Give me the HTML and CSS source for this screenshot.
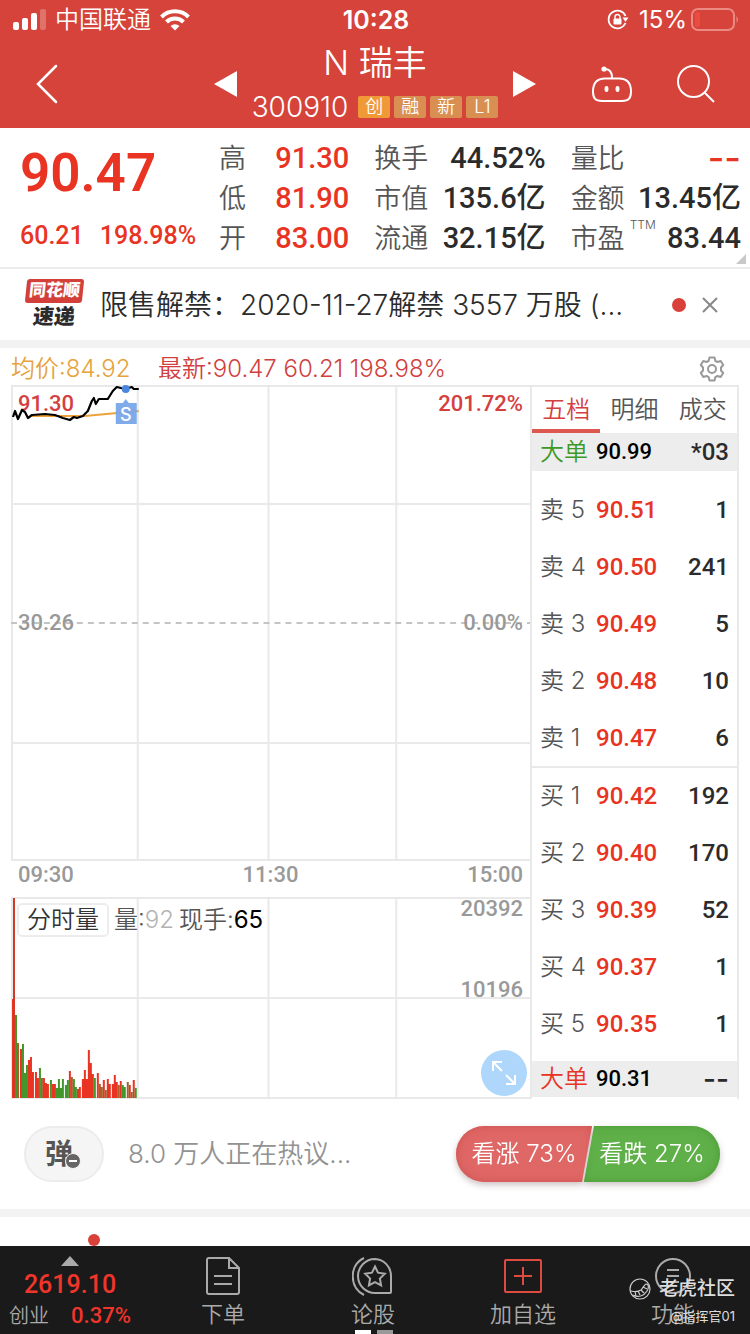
FILE: index.html
```html
<!DOCTYPE html>
<html lang="zh-CN">
<head>
<meta charset="utf-8">
<meta name="viewport" content="width=device-width, initial-scale=1">
<title>N瑞丰 300910</title>
<link rel="stylesheet" href="styles.css">
</head>
<body>
<header class="top">
  <div class="status">
    <div class="status-left">
      <svg width="33" height="22" viewBox="0 0 33 22" fill="#fff"><rect x="0" y="13" width="6" height="8" rx="2"/><rect x="9" y="9" width="6" height="12" rx="2"/><rect x="18" y="4" width="6" height="17" rx="2"/><rect x="27" y="0" width="6" height="21" rx="2" opacity=".25"/></svg>
      <span>中国联通</span>
      <svg width="30" height="22" viewBox="0 0 30 22" fill="none" stroke="#fff" stroke-width="4"><path d="M1.500 8a19 19 0 0 1 27 0"/><path d="M6.500 13a12 12 0 0 1 17 0"/><path d="M15 21.500l-4.500-4.500a6.500 6.500 0 0 1 9 0z" fill="#fff" stroke="none"/></svg>
    </div>
    <time class="clock">10:28</time>
    <div class="status-right">
      <svg width="22" height="22" viewBox="0 0 22 22" fill="none" stroke="#fff" stroke-width="1.800"><path d="M18.500 7a8.800 8.800 0 1 0 0 7"/><path d="M15.500 8.500h6l-3 4.500z" fill="#fff" stroke="none"/><rect x="6.500" y="9.500" width="8" height="6" rx="1" fill="#fff" stroke="none"/><path d="M8 10V8a2.500 2.500 0 0 1 5 0v2" stroke-width="1.400"/></svg>
      <span class="battery">15%<svg width="48" height="24" viewBox="0 0 48 24" fill="none"><rect x="1" y="1" width="42" height="21" rx="6" stroke="#ea8a83" stroke-width="2"/><rect x="4" y="4" width="5" height="15" rx="2" fill="#ec4b40"/><path d="M45.500 8q3 3.500 0 7z" fill="#ea8a83"/></svg></span>
    </div>
  </div>
  <div class="nav">
    <div class="nav-side">
      <button class="icon-btn" aria-label="返回"><svg width="24" height="40" viewBox="0 0 24 40" fill="none" stroke="#fff" stroke-width="2.500" stroke-linecap="round"><path d="M21 2L3 20l18 18"/></svg></button>
      <button class="icon-btn" aria-label="上一只"><svg width="24" height="26" viewBox="0 0 24 26"><path d="M0 13L23 0v26z" fill="#fff"/></svg></button>
    </div>
    <div class="title">
      <h1>N 瑞丰</h1>
      <div class="code-row"><span class="code">300910</span><span class="tag tag-hot">创</span><span class="tag">融</span><span class="tag">新</span><span class="tag">L1</span></div>
    </div>
    <div class="nav-side">
      <button class="icon-btn" aria-label="下一只"><svg width="24" height="26" viewBox="0 0 24 26"><path d="M24 13L1 0v26z" fill="#fff"/></svg></button>
      <div class="nav-tools">
        <button class="icon-btn" aria-label="助手"><svg width="42" height="38" viewBox="0 0 42 38" fill="none" stroke="#fff" stroke-width="2"><path d="M14 4c5 0 7 3 7 9"/><circle cx="13" cy="4" r="2.600" fill="#fff" stroke="none"/><path d="M14 13.500h14c9 0 12 5.500 12 13 0 6.500-2 9.500-9 9.500h-20c-7 0-9-3-9-9.500 0-7.500 3-13 12-13z"/><g fill="#fff" stroke="none"><ellipse cx="15.500" cy="24" rx="2" ry="3"/><ellipse cx="26.500" cy="24" rx="2" ry="3"/></g></svg></button>
        <button class="icon-btn" aria-label="搜索"><svg width="38" height="38" viewBox="0 0 38 38" fill="none" stroke="#fff" stroke-width="2"><circle cx="16.500" cy="16.500" r="15.500"/><path d="M27.500 27.500L37 37"/></svg></button>
      </div>
    </div>
  </div>
</header>

<main>
  <section class="quote">
    <div class="last">
      <strong class="last-price">90.47</strong>
      <div class="last-change"><span>60.21</span><span>198.98%</span></div>
    </div>
    <dl class="stats">
      <div><dt>高</dt><dd class="up">91.30</dd></div>
      <div><dt>换手</dt><dd>44.52%</dd></div>
      <div><dt>量比</dt><dd class="up none">--</dd></div>
      <div><dt>低</dt><dd class="up">81.90</dd></div>
      <div><dt>市值</dt><dd>135.6亿</dd></div>
      <div><dt>金额</dt><dd>13.45亿</dd></div>
      <div><dt>开</dt><dd class="up">83.00</dd></div>
      <div><dt>流通</dt><dd>32.15亿</dd></div>
      <div><dt>市盈<sup>TTM</sup></dt><dd>83.44</dd></div>
    </dl>
  </section>

  <section class="news">
    <div class="news-logo"><span class="logo-top">同花顺</span><span class="logo-bottom">速递</span></div>
    <a class="news-text" href="#">限售解禁：2020-11-27解禁 3557 万股 (...</a>
    <span class="dot"></span>
    <button class="icon-btn" aria-label="关闭"><svg width="16" height="16" viewBox="0 0 16 16" stroke="#888" stroke-width="2"><path d="M1 1l14 14M15 1L1 15"/></svg></button>
  </section>

  <section class="market">
    <div class="info">
      <span class="avg">均价:84.92</span>
      <span class="now">最新:90.47 60.21 198.98%</span>
      <button class="icon-btn" aria-label="设置"><svg width="26" height="26" viewBox="0 0 26 26" fill="none" stroke="#999" stroke-width="2" stroke-linejoin="round"><circle cx="13" cy="13" r="4"/><path d="M10.500 1.500h5l.8 3.300 2.200 1.200 3.200-1 2.500 4-2.200 2.500v3l2.200 2.500-2.500 4-3.200-1-2.200 1.200-.8 3.300h-5l-.8-3.300-2.200-1.200-3.200 1-2.500-4L4 14.500v-3L1.800 9l2.500-4 3.200 1 2.200-1.200z"/></svg></button>
    </div>
    <div class="board">
      <div class="charts">
        <div class="price-chart">
          <svg class="plot" viewBox="0 0 520 476" preserveAspectRatio="none" fill="none">
            <path d="M0 1H520M0 119H520M0 358H520M0 475H520M1 0V476M127 0V476M258 0V476M386 0V476" stroke="#e9e9e9" stroke-width="2"/>
            <path d="M0 238H520" stroke="#c4c4c4" stroke-width="2" stroke-dasharray="6 5"/>
          </svg>
          <span class="lbl lbl-tl up-soft">91.30</span><span class="lbl lbl-tr up-soft">201.72%</span>
          <span class="lbl lbl-ml">30.26</span><span class="lbl lbl-mr">0.00%</span>
          <svg class="plot plot-over" viewBox="0 0 520 476" preserveAspectRatio="none" fill="none">
            <path d="M21 31H74L128 26" stroke="#eda23a" stroke-width="2"/>
            <path d="M2 32L4 26L7 34L11 25L14 27L17 33L21 30L34 29L44 30L52 33L59 35L63 32L66 33L72 31L77 26L81 16L83 13L85 19L88 14L97 14L102 6L106 2L110 3L115 4L121 2L123 4L128 4" stroke="#000" stroke-width="2.200" stroke-linejoin="round"/>
            <circle cx="115" cy="4" r="4" fill="#4a86e0"/>
            <path d="M105 18h7l3-4 3 4h8v21h-21z" fill="#78a6ea" opacity=".95"/>
            <text class="s-mark" x="115" y="36" text-anchor="middle">S</text>
          </svg>
        </div>
        <div class="axis"><span>09:30</span><span>11:30</span><span>15:00</span></div>
        <div class="volume-chart">
          <svg class="plot" viewBox="0 0 520 202" preserveAspectRatio="none" fill="none">
            <path d="M0 1H520M0 101H520M0 201H520M1 0V202M127 0V202M258 0V202M386 0V202" stroke="#e9e9e9" stroke-width="2"/>
            <g stroke-width="2">
              <path stroke="#e93323" d="M2 201V102M10 201V152M18 201V163M20 201V160M22 201V175M25 201V175M27 201V181M33 201V181M35 201V186M37 201V187M42 201V187M44 201V187M59 201V174M67 201V192M69 201V190M72 201V182M74 201V173M76 201V182M78 201V153M80 201V166M82 201V177M87 201V176M93 201V183M97 201V182M99 201V187M102 201V187M104 201V178M106 201V185M110 201V184M119 201V188M123 201V183"/>
              <path stroke="#43962b" d="M5 201V118M12 201V147M14 201V176M16 201V168M29 201V171M40 201V183M46 201V191M48 201V182M50 201V191M52 201V182M55 201V188M57 201V183M63 201V182M65 201V190M84 201V181M112 201V188M114 201V190M125 201V191"/>
              <path stroke="#a8602b" d="M7 201V146M31 201V181M61 201V180M89 201V187M91 201V190M95 201V193M108 201V188M117 201V185M121 201V195"/>
              <path stroke="#cf3b27" d="M3 201V1"/>
            </g>
          </svg>
          <div class="volume-head"><button class="picker">分时量</button><span>量:<i>92</i></span><span>现手:<b>65</b></span></div>
          <span class="lbl lbl-tr">20392</span><span class="lbl lbl-mid">10196</span>
          <button class="expand" aria-label="放大"><svg width="24" height="24" viewBox="0 0 24 24" fill="none" stroke="#fff" stroke-width="2"><path d="M1 10V1h9M1 1l9 9M14 14l9 9M23 14v9h-9"/></svg></button>
        </div>
      </div>
      <div class="book">
        <div class="tabs"><button class="tab active">五档</button><button class="tab">明细</button><button class="tab">成交</button></div>
        <div class="big"><span class="down">大单</span><b>90.99</b><em>*03</em></div>
        <table>
          <tbody>
            <tr><th>卖 5</th><td>90.51</td><td>1</td></tr>
            <tr><th>卖 4</th><td>90.50</td><td>241</td></tr>
            <tr><th>卖 3</th><td>90.49</td><td>5</td></tr>
            <tr><th>卖 2</th><td>90.48</td><td>10</td></tr>
            <tr><th>卖 1</th><td>90.47</td><td>6</td></tr>
          </tbody>
        </table>
        <table class="buys">
          <tbody>
            <tr><th>买 1</th><td>90.42</td><td>192</td></tr>
            <tr><th>买 2</th><td>90.40</td><td>170</td></tr>
            <tr><th>买 3</th><td>90.39</td><td>52</td></tr>
            <tr><th>买 4</th><td>90.37</td><td>1</td></tr>
            <tr><th>买 5</th><td>90.35</td><td>1</td></tr>
          </tbody>
        </table>
        <div class="big big-last"><span class="up">大单</span><b>90.31</b><em class="none">--</em></div>
      </div>
    </div>
  </section>

  <section class="talk">
    <button class="danmu" aria-label="弹幕">弹<svg class="minus" width="16" height="16" viewBox="0 0 16 16"><circle cx="8" cy="8" r="7.500" fill="#666" stroke="#f5f5f5"/><path d="M4 8h8" stroke="#fff" stroke-width="2"/></svg></button>
    <span class="talk-text">8.0 万人正在热议...</span>
    <div class="vote"><button class="vote-up">看涨 73%</button><button class="vote-down">看跌 27%</button></div>
  </section>
  <section class="next"><span class="dot dot-small"></span></section>
</main>

<nav class="tabbar">
  <a class="index" href="#">
    <svg width="18" height="10" viewBox="0 0 18 10"><path d="M9 0l9 10H0z" fill="#aaa"/></svg>
    <strong>2619.10</strong>
    <span class="index-row"><span>创业</span><b>0.37%</b></span>
  </a>
  <a class="item" href="#"><svg width="42" height="42" viewBox="0 0 42 42" fill="none" stroke="#aaa" stroke-width="2"><path d="M27 3H7q-2 0-2 2v32q0 2 2 2h28q2 0 2-2V13zM27 3v10h10M12 21h18M12 29h18"/></svg>下单</a>
  <a class="item" href="#"><svg width="42" height="42" viewBox="0 0 42 42" fill="none" stroke="#aaa" stroke-width="2"><path d="M23 4a17 17 0 1 0 0 34h15q1 0 1-1V21A16.500 17 0 0 0 23 4zM12 3C-3 10-3 32 12 40"/><path d="M23 11.500l3 6.200 6.800 1-4.900 4.800 1.200 6.800-6.100-3.200-6.100 3.200 1.200-6.800-4.900-4.800 6.800-1z"/></svg>论股</a>
  <a class="item" href="#"><svg width="42" height="42" viewBox="0 0 42 42" fill="none" stroke="#dd4a40" stroke-width="2"><rect x="3" y="5" width="36" height="32" rx="1"/><path d="M12 21h18M21 12v18"/></svg>加自选</a>
  <a class="item" href="#"><svg width="42" height="42" viewBox="0 0 42 42" fill="none" stroke="#aaa" stroke-width="2"><circle cx="21" cy="21" r="17"/><path d="M15 15h12M15 21h12M15 27h12"/></svg>功能</a>
  <span class="pager"><i></i><i></i></span>
  <div class="mark">
    <span class="mark-name"><svg width="22" height="22" viewBox="0 0 22 22" fill="none" stroke="#ccc" stroke-width="1.200"><circle cx="11" cy="11" r="10"/><path d="M2 13c4 1 7 1 10-1 2-2 3-5 5-6 3 0 3 4 1 7-3 5-9 7-14 4M6 13l1 5M9 13l2 4M12 12l3 3M14 9l4 2"/></svg>老虎社区</span>
    <span class="mark-user">@指挥官01</span>
  </div>
</nav>
</body>
</html>
```
FILE: styles.css
```css
* { box-sizing: border-box; }
body {
  margin: 0;
  min-height: 100vh;
  display: flex;
  flex-direction: column;
  background: #fff;
  color: #2b2b2b;
  font-family: Inter, "Noto Sans CJK SC", sans-serif;
  font-weight: 350;
  font-size: 24px;
  line-height: 1;
}
main { flex: 1; display: flex; flex-direction: column; }
button { border: 0; padding: 0; background: none; font: inherit; color: inherit; }
a { color: inherit; text-decoration: none; }
i, em { font-style: normal; }
svg { display: block; flex: none; }
.icon-btn { display: flex; }
.up { color: #e93323; }
.down { color: #3e9a26; }

.top { background: #d5433a; color: #fff; }
.status {
  display: grid;
  grid-template-columns: 1fr auto 1fr;
  align-items: center;
  height: 40px;
  padding: 0 11px 0 13px;
}
.status-left { display: flex; align-items: center; gap: 9px; }
.status-right { display: flex; align-items: center; justify-content: flex-end; gap: 10px; }
.battery { display: flex; align-items: center; gap: 4px; font-weight: 400; }
.clock { font-size: 25px; font-weight: 600; }
.nav {
  display: grid;
  grid-template-columns: 1fr auto 1fr;
  gap: 14px;
  height: 88px;
  padding: 0 35px;
}
.nav-side { display: flex; justify-content: space-between; align-items: center; }
.nav-tools { display: flex; align-items: center; gap: 44px; }
.title { display: flex; flex-direction: column; align-items: center; gap: 15px; padding-top: 5px; }
h1 { margin: 0; font-size: 34px; line-height: 36px; font-weight: 350; }
.code-row { display: flex; align-items: center; gap: 4px; height: 22px; }
.code { font-size: 28px; margin-right: 6px; }
.tag {
  width: 32px;
  height: 22px;
  border-radius: 2px;
  background: #d98f52;
  font-size: 18px;
  line-height: 22px;
  text-align: center;
}
.tag-hot { background: #f09a37; }

.quote { position: relative; display: flex; height: 141px; padding: 10px 9px 0 20px; border-bottom: 2px solid #ebebeb; }
.quote::after {
  content: "";
  position: absolute;
  right: 4px;
  bottom: 3px;
  border: 5px solid transparent;
  border-right-color: #c8c8c8;
  border-bottom-color: #c8c8c8;
}
.last { flex: 0 0 199px; color: #e93323; font-family: Roboto, sans-serif; }
.last-price { display: block; padding-top: 9px; font-size: 53px; line-height: 52px; font-weight: 600; }
.last-change { display: flex; gap: 16px; padding-top: 21px; font-size: 25px; line-height: 32px; font-weight: 500; }
.stats { flex: 1; display: grid; grid-template-columns: 130fr 171fr 170fr; column-gap: 25px; grid-auto-rows: 40px; margin: 0; }
.stats div { display: flex; justify-content: space-between; align-items: center; white-space: nowrap; }
.stats dt { position: relative; font-size: 27px; color: #555; }
.stats sup { position: absolute; left: 100%; top: -8px; padding-left: 5px; font-size: 12px; line-height: 16px; }
.stats dd { margin: 0; font-family: Roboto, "Noto Sans CJK SC", sans-serif; font-size: 29px; font-weight: 500; }
.stats dd.none { font: 500 36px/40px Inter, sans-serif; }

.news { display: flex; align-items: center; height: 71px; padding: 0 32px 0 24px; }
.news-logo { display: flex; flex-direction: column; align-items: center; width: 60px; font-weight: 900; }
.news-logo span { transform: skewX(-6deg); }
.logo-top { width: 57px; height: 24px; background: #d3403a; color: #fff; border-radius: 3px; font-size: 17px; line-height: 23px; text-align: center; }
.logo-bottom { font-size: 21px; line-height: 28px; }
.news-text { flex: 1; min-width: 0; padding-left: 16px; font-size: 28px; line-height: 40px; white-space: nowrap; overflow: hidden; }
.dot { width: 14px; height: 14px; margin-right: 16px; border-radius: 50%; background: #d9403a; }

.market { border-top: 8px solid #f3f3f3; padding: 0 11px; }
.info { display: flex; align-items: center; height: 37px; padding: 4px 14px 0 0; white-space: nowrap; }
.avg { color: #e6a23c; width: 147px; }
.now { flex: 1; color: #d13f3f; }
.board { display: flex; }
.charts { flex: 1; min-width: 0; }
.price-chart, .volume-chart { position: relative; }
.price-chart { height: 476px; }
.volume-chart { height: 202px; }
.plot { display: block; width: 100%; height: 100%; }
.plot-over { position: absolute; inset: 0; }
.lbl, .axis { font-family: Roboto, sans-serif; font-size: 22px; line-height: 24px; font-weight: 500; color: #999; }
.lbl { position: absolute; }
.lbl.up-soft { color: #d3403f; }
.lbl-tl { top: 7px; left: 7px; }
.lbl-tr { top: 7px; right: 7px; }
.volume-chart .lbl-tr { top: 0; }
.lbl-ml { top: 226px; left: 7px; }
.lbl-mr { top: 226px; right: 7px; }
.lbl-mid { top: 81px; right: 7px; }
.s-mark { font: 500 18px Inter, sans-serif; fill: #fff; }
.axis { display: flex; justify-content: space-between; height: 36px; padding: 2px 7px; }
.volume-head { position: absolute; top: 6px; left: 6px; display: flex; align-items: center; gap: 5px; height: 34px; color: #555; }
.volume-head i { color: #b3b3b3; }
.volume-head b { color: #000; font-weight: 400; }
.picker { height: 34px; padding: 0 8px; border: 2px solid #ededed; border-radius: 5px; background: #fff; color: #333; }
.expand {
  position: absolute;
  right: 3px;
  bottom: 3px;
  display: grid;
  place-items: center;
  width: 46px;
  height: 46px;
  border-radius: 50%;
  background: #aed7fb;
}

.book { flex: 0 0 209px; border: 2px solid #e9e9e9; border-bottom: 0; }
.tabs { display: flex; height: 46px; }
.tab { flex: 1; padding-top: 4px; border-bottom: 4px solid transparent; color: #555; font-size: 24px; }
.tab.active { color: #d3403f; border-color: #dc5850; }
.big { display: flex; align-items: center; height: 38px; padding: 0 8px; background: #ededed; }
.big b, .big em, .book td { font-family: Roboto, sans-serif; font-weight: 500; }
.big b { flex: 1; padding-left: 8px; color: #000; font-size: 22px; }
.big em.none { font: 500 28px/36px Inter, sans-serif; }
.big-last { height: 36px; margin-top: 9px; }
.book table { width: 100%; border-collapse: collapse; table-layout: fixed; margin-top: 10px; }
.book table.buys { margin-top: 0; border-top: 2px solid #e9e9e9; }
.book tr { height: 57px; }
.book th, .book td { padding: 0; text-align: left; }
.book th { width: 64px; padding-left: 8px; font-weight: 350; font-size: 24px; color: #555; white-space: nowrap; }
.book td { width: 70px; font-size: 24px; color: #e93323; }
.book td:last-child { width: auto; padding-right: 8px; text-align: right; color: #2b2b2b; }

.talk { display: flex; align-items: center; height: 118px; padding: 0 30px 0 24px; border-bottom: 8px solid #f3f3f3; }
.danmu { position: relative; width: 80px; height: 56px; padding-right: 10px; border: 2px solid #ececec; border-radius: 28px; background: #f5f5f5; color: #555; font-size: 28px; font-weight: 700; }
.minus { position: absolute; right: 21px; bottom: 11px; }
.talk-text { flex: 1; padding-left: 24px; color: #929292; font-size: 26px; }
.vote { display: flex; width: 264px; height: 56px; color: #fff; filter: drop-shadow(0 3px 3px rgba(90, 60, 60, .3)); }
.vote button { height: 56px; font-size: 24px; white-space: nowrap; }
.vote-up { width: 136px; border-radius: 28px 0 0 28px; background: #df6765; box-shadow: inset 0 0 10px #cd5452; clip-path: polygon(0 0, 100% 0, 126px 100%, 0 100%); }
.vote-down { width: 136px; margin-left: -8px; border-radius: 0 28px 28px 0; background: #60b04a; box-shadow: inset 0 0 10px #4a9b37; clip-path: polygon(10px 0, 100% 0, 100% 100%, 0 100%); }
.next { flex: 1; min-height: 28px; padding-left: 88px; display: flex; align-items: flex-end; }
.dot-small { width: 12px; height: 12px; margin: 0; }

.tabbar { position: relative; display: grid; grid-template-columns: repeat(5, 1fr); height: 88px; background: #1a1a1a; color: #aaa; }
.item { display: flex; flex-direction: column; align-items: center; gap: 5px; padding: 9px 4px 0 0; font-size: 22px; line-height: 24px; }
.index { display: flex; flex-direction: column; align-items: center; padding: 10px 10px 0 0; }
.index strong { color: #f0352b; font-family: Roboto, sans-serif; font-size: 25px; line-height: 34px; font-weight: 500; padding-top: 2px; }
.index-row { display: flex; gap: 22px; font-size: 20px; line-height: 28px; }
.index-row b { color: #f0352b; font-family: Roboto, sans-serif; font-size: 22px; font-weight: 500; }
.pager { position: absolute; bottom: 0; left: 50%; display: flex; gap: 6px; transform: translateX(-20px); }
.pager i { width: 16px; height: 4px; background: #fff; }
.pager i + i { background: #999; }
.mark { position: absolute; right: 15px; top: 30px; display: flex; flex-direction: column; align-items: flex-end; color: #ddd; }
.mark-name { display: flex; align-items: center; gap: 8px; font-size: 19px; line-height: 26px; font-weight: 500; }
.mark-user { font-size: 13px; line-height: 28px; font-weight: 400; }
```
